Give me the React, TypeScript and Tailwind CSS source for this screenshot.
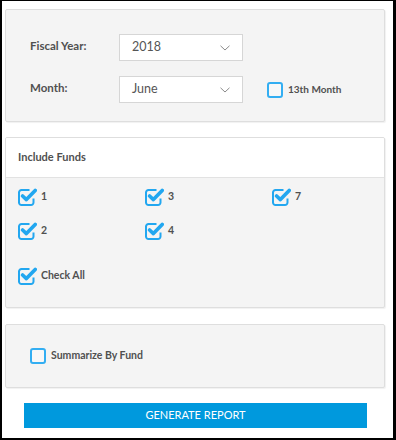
import React from "react";

const font = { fontFamily: "Lato, 'Open Sans', sans-serif" };

function Checked() {
  return (
    <svg width="19" height="18" viewBox="0 0 19 18" className="shrink-0">
      <path
        d="M11.5 2 H3.5 A2.5 2.5 0 0 0 1 4.5 V14.5 A2.5 2.5 0 0 0 3.5 17 H13 A2.5 2.5 0 0 0 15.5 14.5 V10.5"
        fill="none"
        stroke="#22a7f0"
        strokeWidth="2"
      />
      <path
        d="M4.6 8 L8.4 11.6 L17.2 2.4"
        fill="none"
        stroke="#22a7f0"
        strokeWidth="3.6"
        strokeLinecap="round"
        strokeLinejoin="round"
      />
    </svg>
  );
}

function Empty() {
  return <div className="w-[16px] h-[16px] rounded-[3px] border-2 border-[#33aef2] bg-white/40 shrink-0" />;
}

function Chevron() {
  return (
    <svg width="10" height="6" viewBox="0 0 10 6" className="shrink-0">
      <path d="M0.5 0.8 L5 5 L9.5 0.8" fill="none" stroke="#8a8a8a" strokeWidth="1" />
    </svg>
  );
}

function Select({ value }: { value: string }) {
  return (
    <div className="w-[124px] h-[27px] bg-white border border-[#d6d6d6] flex items-center justify-between pl-[12px] pr-[12px]">
      <span className="text-[12.5px] text-[#555]">{value}</span>
      <Chevron />
    </div>
  );
}

function Fund({ label }: { label: string }) {
  return (
    <div className="flex items-center h-[17px]">
      <Checked />
      <span className="ml-[4px] text-[10.5px] font-bold text-[#505050]">{label}</span>
    </div>
  );
}

export default function App() {
  return (
    <div
      style={font}
      className="w-[396px] h-[440px] box-border bg-white border-black border-t border-l-2 border-r-[3px] border-b-2 flex flex-col pt-[8px] pl-[3px] pr-[8px]"
    >
      <div className="h-[113px] bg-[#f4f4f4] border border-[#dedede] rounded-[2px] shadow-[1px_1px_1px_rgba(0,0,0,0.06)] pt-[24px] pl-[24px] flex flex-col gap-[15px]">
        <div className="flex items-center h-[27px]">
          <span className="w-[89px] -mt-[4px] text-[11.5px] font-bold text-[#505050]">Fiscal Year:</span>
          <Select value="2018" />
        </div>
        <div className="flex items-center h-[27px]">
          <span className="w-[89px] -mt-[4px] text-[11.5px] font-bold text-[#505050]">Month:</span>
          <Select value="June" />
          <div className="ml-[24px] flex items-center">
            <Empty />
            <span className="ml-[5px] text-[10px] font-bold text-[#505050]">13th Month</span>
          </div>
        </div>
      </div>

      <div className="mt-[15px] h-[171px] bg-[#f4f4f4] border border-[#dedede] rounded-[2px] shadow-[1px_1px_1px_rgba(0,0,0,0.06)] flex flex-col overflow-hidden">
        <div className="h-[40px] bg-white border-b border-[#e2e2e2] flex items-center pl-[12px] shrink-0">
          <span className="text-[11px] font-bold text-[#505050]">Include Funds</span>
        </div>
        <div className="pl-[12px] pt-[10px] flex flex-col">
          <div className="grid grid-cols-[127px_127px_127px] gap-y-[17px]">
            <Fund label="1" />
            <Fund label="3" />
            <Fund label="7" />
            <Fund label="2" />
            <Fund label="4" />
          </div>
          <div className="mt-[28px]">
            <Fund label="Check All" />
          </div>
        </div>
      </div>

      <div className="mt-[16px] h-[64px] bg-[#f4f4f4] border border-[#dedede] rounded-[2px] shadow-[1px_1px_1px_rgba(0,0,0,0.06)] flex items-center pl-[24px]">
        <Empty />
        <span className="ml-[5px] text-[10.5px] font-bold text-[#505050]">Summarize By Fund</span>
      </div>

      <div className="mt-[15px] ml-[19px] w-[343px] h-[25px] bg-[#0099dd] flex items-center justify-center">
        <span className="text-[11px] text-white">GENERATE REPORT</span>
      </div>
    </div>
  );
}
